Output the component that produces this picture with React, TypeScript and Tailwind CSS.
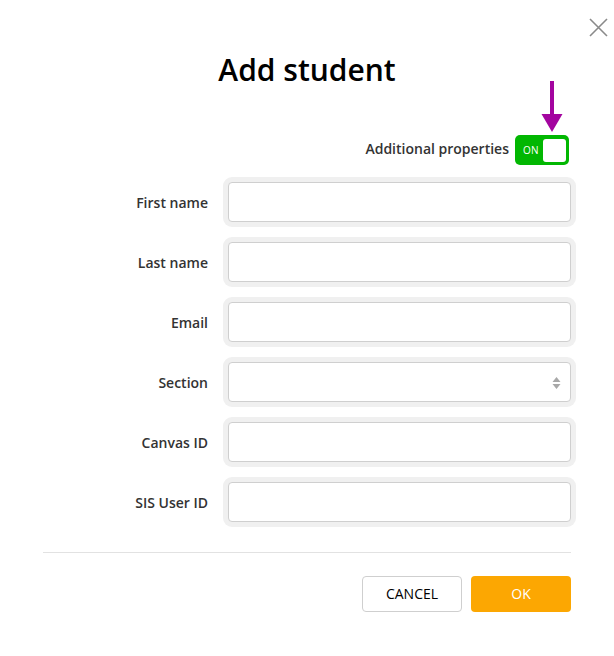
const fields = [
  { label: 'First name' },
  { label: 'Last name' },
  { label: 'Email' },
  { label: 'Section', select: true },
  { label: 'Canvas ID' },
  { label: 'SIS User ID' },
]

export default function App() {
  return (
    <div
      className="relative w-[614px] h-[656px] bg-white text-[#333]"
      style={{ fontFamily: '"Open Sans", "Noto Sans", sans-serif' }}
    >
      {/* close */}
      <button className="absolute left-[588px] top-[17px] w-[21px] h-[21px]">
        <svg viewBox="0 0 21 21" className="w-[21px] h-[21px]">
          <path d="M2 2 L19 19 M19 2 L2 19" stroke="#8a8a8a" strokeWidth="1.6" />
        </svg>
      </button>

      {/* annotation arrow */}
      <svg className="absolute left-[540px] top-[81px]" width="24" height="52" viewBox="0 0 24 52">
        <rect x="10" y="0" width="4" height="34" fill="#a3059f" />
        <path d="M1.5 33 L22.5 33 L12 51 Z" fill="#a3059f" />
      </svg>

      <h1 className="pt-[50px] h-[90px] text-center text-[30px] leading-[40px] font-semibold text-black">
        Add student
      </h1>

      <div className="mt-[45px] h-[30px] flex items-center justify-end gap-[6px] pr-[45px]">
        <span className="text-[14px] leading-[18px] font-semibold mb-[3px]">Additional properties</span>
        <div className="w-[54px] h-[30px] rounded-[5px] bg-[#02b702] flex items-center justify-between pl-[8px] pr-[3px]">
          <span className="text-[10px] text-white tracking-wide">ON</span>
          <span className="w-[23px] h-[23px] rounded-[3px] bg-white" />
        </div>
      </div>

      <div className="mt-[12px] flex flex-col gap-[10px]">
        {fields.map(f => (
          <div key={f.label} className="flex items-center h-[50px]">
            <label className="w-[208px] text-right text-[14px] font-semibold">{f.label}</label>
            <div className="ml-[15px] w-[353px] p-[5px] rounded-[9px] bg-[#f0f0f0]">
              <div className="relative h-[40px] rounded-[4px] border border-[#cfcfcf] bg-white">
                {f.select && (
                  <svg className="absolute right-[9px] top-[14px]" width="9" height="12" viewBox="0 0 9 12">
                    <path d="M4.5 0 L8.5 5 L0.5 5 Z M4.5 12 L8.5 7 L0.5 7 Z" fill="#a8a8a8" />
                  </svg>
                )}
              </div>
            </div>
          </div>
        ))}
      </div>

      <div className="mt-[25px] ml-[43px] w-[528px] h-px bg-[#e2e2e2]" />

      <div className="mt-[23px] flex justify-end gap-[9px] pr-[43px]">
        <button className="w-[100px] h-[36px] pb-[2px] rounded-[4px] border border-[#cfcfcf] bg-white text-[14px] text-black">
          CANCEL
        </button>
        <button className="w-[100px] h-[36px] pb-[2px] rounded-[4px] bg-[#fca702] text-[14px] text-white">
          OK
        </button>
      </div>
    </div>
  )
}
